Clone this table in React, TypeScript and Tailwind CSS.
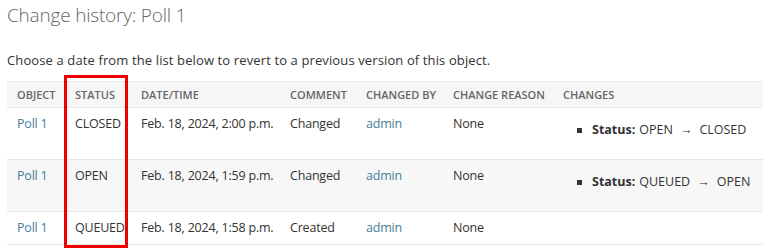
import React from 'react'

const FONT = '"Open Sans", "Noto Sans", Arial, sans-serif'

type Entry = {
  status: string
  date: string
  comment: string
  change?: { from: string; to: string }
}

const entries: Entry[] = [
  { status: 'CLOSED', date: 'Feb. 18, 2024, 2:00 p.m.', comment: 'Changed', change: { from: 'OPEN', to: 'CLOSED' } },
  { status: 'OPEN', date: 'Feb. 18, 2024, 1:59 p.m.', comment: 'Changed', change: { from: 'QUEUED', to: 'OPEN' } },
  { status: 'QUEUED', date: 'Feb. 18, 2024, 1:58 p.m.', comment: 'Created' },
]

const headers = ['Object', 'Status', 'Date/time', 'Comment', 'Changed by', 'Change reason', 'Changes']
const widths = [58, 66, 149, 76, 87, 110, 210]

export default function App() {
  return (
    <div className="relative w-[770px] h-[252px] bg-white px-[7px] text-[#333]" style={{ fontFamily: FONT }}>
      <h1 className="text-[19px] leading-[30px] font-light tracking-[-0.2px] text-[#666]">Change history: Poll 1</h1>

      <p className="mt-[20px] text-[13px] leading-[20px] tracking-[0.12px]">
        Choose a date from the list below to revert to a previous version of this object.
      </p>

      <table className="mt-[11px] w-[756px] table-fixed border-collapse text-[12.5px] leading-[16px]">
        <colgroup>
          {widths.map((w, i) => (
            <col key={i} style={{ width: w }} />
          ))}
        </colgroup>
        <thead>
          <tr className="bg-[#f6f6f6] border-y border-[#e8e8e8]">
            {headers.map(h => (
              <th
                key={h}
                className="px-[10px] py-[5px] text-left text-[11px] leading-[15px] font-semibold uppercase text-[#666] whitespace-nowrap"
              >
                {h}
              </th>
            ))}
          </tr>
        </thead>
        <tbody className="tracking-[-0.2px]">
          {entries.map((e, i) => (
            <tr key={e.status} className={`border-b border-[#e8e8e8] align-top ${i % 2 === 1 ? 'bg-[#f7f7f7]' : 'bg-white'}`}>
              <td className="px-[10px] py-[8px] text-[#447e9b]">Poll 1</td>
              <td className="px-[10px] py-[8px]">{e.status}</td>
              <td className="px-[10px] py-[8px] whitespace-nowrap">{e.date}</td>
              <td className="px-[10px] py-[8px]">{e.comment}</td>
              <td className="px-[10px] py-[8px] text-[#447e9b]">admin</td>
              <td className="px-[10px] py-[8px]">None</td>
              <td className="px-[10px] py-[8px] tracking-normal">
                {e.change && (
                  <ul className="pt-[6px] pb-[13px]">
                    <li className="flex items-center whitespace-nowrap">
                      <span className="ml-[14px] mr-[10px] w-[5px] h-[5px] bg-[#333]" />
                      <strong className="font-bold">Status:</strong>
                      <span className="ml-[4px]">{e.change.from}</span>
                      <span className="mx-[7px]">→</span>
                      <span>{e.change.to}</span>
                    </li>
                  </ul>
                )}
              </td>
            </tr>
          ))}
        </tbody>
      </table>

      {/* highlight around the status column */}
      <div className="absolute left-[64px] top-[75px] w-[64px] h-[173px] border-[3px] border-[#ee0000] pointer-events-none" />
    </div>
  )
}
